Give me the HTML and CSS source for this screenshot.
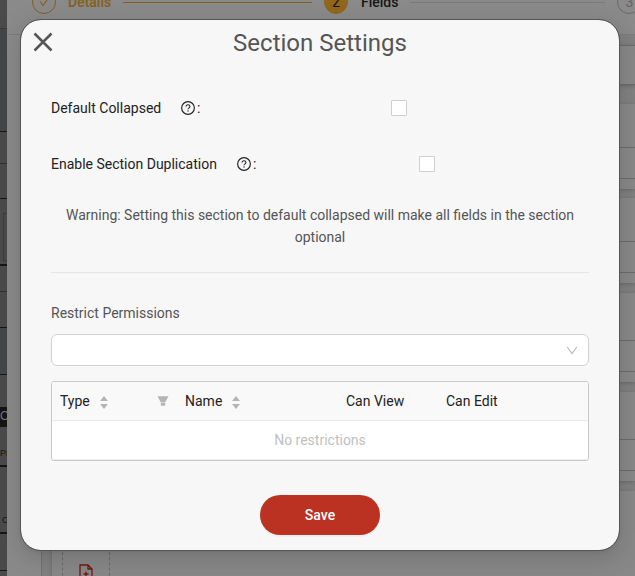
FILE: index.html
```
<!DOCTYPE html>
<html lang="en">
<head>
	<meta charset="utf-8">
	<title>Section Settings</title>
	<link rel="stylesheet" href="styles.css">
</head>
<body>
	<!-- form builder behind the dialog -->
	<div class="page">
		<div class="preview">
			<div class="row r1"></div>
			<div class="row r2 blue"></div>
			<div class="row r3"></div>
			<div class="row r4"></div>
			<div class="row r5"><span class="box"></span></div>
			<div class="row r6"></div>
			<div class="row r7"></div>
			<div class="row r8 blue"></div>
			<div class="row r9"></div>
			<div class="row r10">C</div>
			<div class="row r11">Pr</div>
			<div class="row r12">C</div>
			<div class="row r13"></div>
			<div class="row r14"></div>
		</div>
		<div class="builder">
			<div class="steps">
				<span class="step-icon done">
					<svg width="12" height="12" viewBox="0 0 12 12"><path d="M2 5.5l3 4L10.5 2" fill="none" stroke="currentColor" stroke-width="1.1"/></svg>
				</span>
				<span class="step-title gold">Details</span>
				<span class="step-line gold-line"></span>
				<span class="step-icon active">2</span>
				<span class="step-title">Fields</span>
				<span class="step-line"></span>
				<span class="step-icon wait">3</span>
			</div>
			<div class="sections">
				<div class="card first"><div class="field"></div></div>
				<div class="card second"><div class="field"></div><div class="field foot"></div></div>
				<div class="card third"><div class="field"></div><div class="field foot"></div></div>
				<div class="card"><div class="field"></div><div class="field foot"></div></div>
				<div class="card"><div class="field"></div><div class="field foot"></div></div>
				<div class="card last">
					<div class="add">
						<svg width="14" height="17" viewBox="0 0 14 17"><path d="M1 16V1h8l4 4v11zM9 1v4h4M7 7.5v5M4.500 10h5" fill="none" stroke="currentColor" stroke-width="1.3"/></svg>
					</div>
				</div>
			</div>
		</div>
	</div>

	<div class="modal">
		<button class="close" aria-label="Close">
			<svg width="20" height="20" viewBox="0 0 20 20"><path d="M1.500 1.500l17 17M18.500 1.500l-17 17" stroke="currentColor" stroke-width="2.500"/></svg>
		</button>
		<h1>Section Settings</h1>

		<div class="option">
			<span class="label">Default Collapsed</span>
			<svg class="help" width="14" height="14" viewBox="0 0 14 14"><circle cx="7" cy="7" r="6.350" fill="none" stroke="currentColor" stroke-width="1.15"/><path d="M5.100 5.500c0-2.400 3.850-2.300 3.850 0 0 1.400-1.900 1.300-1.900 2.800" fill="none" stroke="currentColor" stroke-width="1.050"/><circle cx="7.050" cy="10" r=".7" fill="currentColor"/></svg>
			<span class="colon">:</span>
			<span class="checkbox"></span>
		</div>
		<div class="option wide">
			<span class="label">Enable Section Duplication</span>
			<svg class="help" width="14" height="14" viewBox="0 0 14 14"><circle cx="7" cy="7" r="6.350" fill="none" stroke="currentColor" stroke-width="1.15"/><path d="M5.100 5.500c0-2.400 3.850-2.300 3.850 0 0 1.400-1.900 1.300-1.900 2.800" fill="none" stroke="currentColor" stroke-width="1.050"/><circle cx="7.050" cy="10" r=".7" fill="currentColor"/></svg>
			<span class="colon">:</span>
			<span class="checkbox"></span>
		</div>

		<p class="warning">Warning: Setting this section to default collapsed will make all fields in the section optional</p>

		<div class="permissions">
			<div class="heading">Restrict Permissions</div>
			<div class="select">
				<svg width="12" height="12" viewBox="0 0 12 12"><path d="M1.200 3L6 9.500 10.800 3" fill="none" stroke="currentColor" stroke-width="1.100"/></svg>
			</div>
			<div class="table">
				<div class="thead">
					<div class="th type">Type
						<svg class="sort" width="8" height="13" viewBox="0 0 8 13"><path d="M0 5l4-5 4 5zM0 8h8l-4 5z" fill="currentColor"/></svg>
						<svg class="filter" width="12" height="10" viewBox="0 0 12 10"><path d="M.5.300h11L8.400 6H3.600zM3.800 6.600h4.400v3.100H3.800z" fill="currentColor"/></svg>
					</div>
					<div class="th name">Name
						<svg class="sort" width="8" height="13" viewBox="0 0 8 13"><path d="M0 5l4-5 4 5zM0 8h8l-4 5z" fill="currentColor"/></svg>
					</div>
					<div class="th view">Can View</div>
					<div class="th">Can Edit</div>
				</div>
				<div class="empty">No restrictions</div>
			</div>
		</div>

		<button class="save">Save</button>
	</div>
</body>
</html>
```
FILE: styles.css
```
* {
	box-sizing: border-box;
}

body {
	margin: 0;
	width: 635px;
	height: 576px;
	overflow: hidden;
	position: relative;
	font-family: Roboto, sans-serif;
	font-size: 14px;
	color: #222;
}

.page {
	display: flex;
	width: 635px;
	height: 576px;
	overflow: hidden;
	background: #8a8a8a;
}

/* document preview on the left */
.preview {
	width: 7px;
	flex: none;
	overflow: hidden;
	background: #4a4a4a;
	font: 9px/12px "Liberation Sans", sans-serif;
	color: #161616;
}

.row {
	border-bottom: 1px solid #161616;
	overflow: hidden;
}

.blue { background: #434648; }
.r1 { height: 29px; border-color: #3a3a3a; }
.r2 { height: 103px; }
.r3 { height: 32px; border-color: #303030; }
.r4 { height: 35px; }
.r5 { height: 67px; padding: 14px 0 0 3px; border-bottom-width: 2px; }
.box { display: block; width: 6px; height: 48px; border: 1px solid #3a3a3a; }
.r6 { height: 26px; border-color: #303030; }
.r7 { height: 36px; }
.r8 { height: 47px; }
.r9 { height: 32px; border: 0; }
.r10 { height: 20px; background: #151515; color: #777; font-size: 12px; line-height: 18px; }
.r11 { height: 40px; padding-top: 20px; border-bottom-width: 2px; }
.r12 { height: 67px; padding: 47px 0 0 2px; border-bottom-width: 2px; }
.r13 { height: 37px; }
.r14 { border: 0; }

.builder {
	flex: none;
	width: 628px;
	overflow: hidden;
}

.steps {
	display: flex;
	align-items: center;
	height: 35px;
	padding: 0 0 30px 25px;
	border-bottom: 1px solid #7c7c7c;
}

.step-icon {
	display: flex;
	align-items: center;
	justify-content: center;
	flex: none;
	width: 24px;
	height: 24px;
	border: 1px solid #696969;
	border-radius: 50%;
	color: #636363;
}

.done { border-color: #85601a; color: #85601a; }
.active { background: #90671c; border-color: #90671c; color: #111; }
.wait { margin-left: 12px; }

.step-title {
	flex: none;
	margin: 0 12px 0 13px;
	font-weight: 500;
	color: #171717;
}

.gold { width: 42px; margin: 0 13px 0 12px; color: #85601a; }
.step-line { flex: none; width: 195px; height: 1px; background: #7b7b7b; }
.gold-line { width: 189px; margin-right: 12px; background: #85601a; }

.sections {
	height: 541px;
	margin-left: 34px;
	padding: 10px 0 0 10px;
	border-left: 1px solid #717171;
	background: #808080;
}

.card {
	height: 89px;
	margin-bottom: 10px;
	background: #888;
	box-shadow: 0 1px 4px rgba(0, 0, 0, .2);
}

.field {
	height: 48px;
	border-bottom: 1px solid #6b6b6b;
}

.foot { height: 31px; }
.first { height: 40px; margin-bottom: 19px; border-top: 1px solid #6b6b6b; }
.first .field { height: 39px; }
.second { height: 85px; margin-bottom: 9px; }
.second .field:first-child, .third .field:first-child { height: 44px; }
.third { height: 85px; }
.last { padding-left: 10px; }

.add {
	width: 48px;
	height: 100px;
	padding: 72px 0 0 16px;
	border: 1px dashed #686868;
	color: #711811;
}

/* dialog */
.modal {
	position: absolute;
	left: 20px;
	top: 19px;
	width: 600px;
	height: 532px;
	padding: 0 31px;
	background: #f7f7f7;
	background-clip: padding-box;
	border: 1px solid #555650;
	border-radius: 21px;
	box-shadow: 0 6px 16px rgba(0, 0, 0, .08), 0 3px 6px -4px rgba(0, 0, 0, .12), 0 9px 28px 8px rgba(0, 0, 0, .05);
}

.modal h1 {
	margin: 0;
	padding-top: 6px;
	height: 60px;
	text-align: center;
	font-size: 24px;
	line-height: 34px;
	font-weight: 400;
	color: #555;
}

.close {
	position: absolute;
	left: 12px;
	top: 12px;
	width: 20px;
	height: 20px;
	padding: 0;
	border: 0;
	background: none;
	color: #555;
}

.close svg, .add svg {
	display: block;
}

.option {
	display: flex;
	align-items: center;
	height: 56px;
	margin-left: -1px;
}

.label { width: 130px; }
.wide .label { width: 186px; }
.help { flex: none; }
.colon { width: 6px; margin-left: 2px; }

.checkbox {
	width: 16px;
	height: 16px;
	margin-left: 188px;
	background: #fff;
	border: 1px solid #d0d0d0;
	border-radius: 1px;
}

.wide .checkbox { margin-left: 160px; }

.warning {
	margin: 0 -1px;
	height: 81px;
	padding: 12px 10px 0;
	text-align: center;
	line-height: 22px;
	color: #555;
	border-bottom: 1px solid #e6e6e6;
}

.permissions {
	margin: 0 -1px;
	padding-top: 29px;
}

.heading {
	height: 32px;
	line-height: 22px;
	color: #555;
}

.select {
	display: flex;
	align-items: center;
	justify-content: flex-end;
	height: 32px;
	padding-right: 10px;
	background: #fff;
	border: 1px solid #d2d2d2;
	border-radius: 6px;
	color: #b5b5b5;
}

.table {
	height: 80px;
	margin-top: 15px;
	background: #fff;
	border: 1px solid #c8c8c8;
	border-radius: 3px;
	overflow: hidden;
}

.thead {
	display: flex;
	height: 39px;
	padding-left: 8px;
	background: #f9f9f9;
	border-bottom: 1px solid #eaeaea;
}

.th {
	display: flex;
	align-items: center;
}

.type { width: 125px; }
.name { width: 161px; }
.view { width: 100px; }
.sort { margin: 2px 0 0 10px; color: #b5b5b5; }
.filter { margin: 0 16px 0 auto; color: #b5b5b5; }

.empty {
	height: 39px;
	line-height: 39px;
	text-align: center;
	color: #bfbfbf;
	border-bottom: 1px solid #eee;
}

.save {
	display: block;
	width: 120px;
	height: 40px;
	margin: 34px auto 0;
	border: 0;
	border-radius: 20px;
	background: #bc3222;
	box-shadow: 0 2px 0 rgba(0, 0, 0, .03);
	color: #fff;
	font: 500 14px Roboto, sans-serif;
}
```
